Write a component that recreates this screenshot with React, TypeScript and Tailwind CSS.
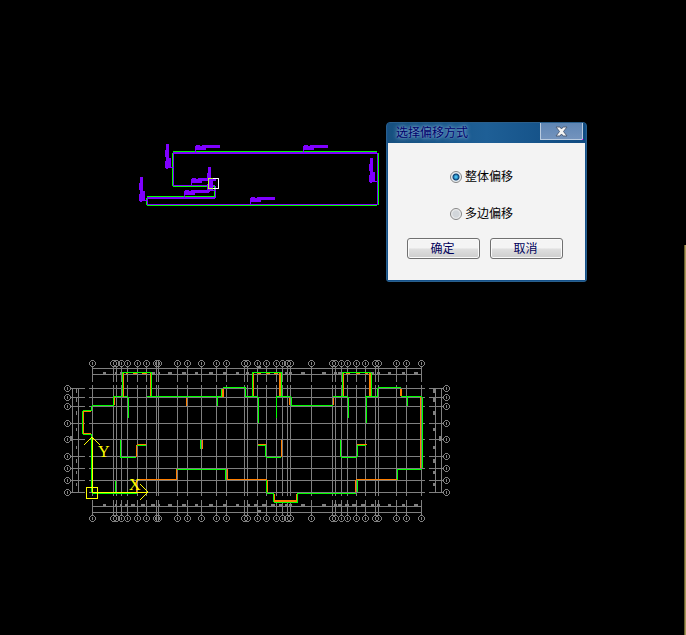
import { useState } from "react";

type Box = [number, number, number, number];

const GRAY = "#808080";
const GREEN = "#00ff00";
const ORANGE = "#ff7f00";
const PURPLE = "#7f00ff";
const YELLOW = "#ffff00";

// Axis positions of the floor plan
const axisX = [
  92, 113, 116, 121, 127, 137, 146, 156, 158, 177, 187, 201, 216, 226, 244, 247,
  257, 266, 276, 282, 287, 290, 311, 332, 335, 341, 347, 356, 365, 375, 378, 396,
  406, 421,
];
const axisY = [388, 397, 406, 423, 439, 456, 468, 480, 492];

// Dimension texts, too small to read at this zoom level: [x, width]
const dimsTop: [number, number][] = [
  [103, 3], [115, 2], [120, 3], [152, 3], [158, 2], [168, 4], [182, 4], [195, 3],
  [209, 4], [223, 3], [236, 3], [246, 3], [285, 3], [289, 3], [301, 4], [322, 4],
  [334, 3], [338, 4], [371, 3], [377, 3], [388, 3], [402, 3], [414, 4],
];
const dimsBottom: [number, number][] = [
  [103, 3], [115, 2], [120, 2], [125, 2], [131, 4], [141, 4], [151, 4], [158, 2],
  [168, 4], [182, 4], [195, 3], [209, 4], [223, 3], [236, 3], [247, 3], [254, 3],
  [262, 4], [271, 4], [279, 4], [285, 3], [289, 3], [301, 4], [322, 4], [334, 3],
  [338, 4], [345, 4], [352, 4], [361, 4], [371, 3], [377, 3], [388, 3], [402, 3],
  [414, 4],
];
const dimsSide: [number, number][] = [
  [389, 4], [398, 4], [411, 4], [428, 3], [446, 3], [459, 4], [471, 3], [483, 3],
];

const greenWalls: Box[] = [
  // stair tops
  [122, 372, 30, 1], [122, 373, 1, 24], [151, 373, 1, 24],
  [252, 372, 30, 1], [252, 373, 1, 24], [281, 373, 1, 24],
  [342, 372, 29, 1], [342, 373, 1, 24], [371, 373, 1, 24],
  // upper outline
  [92, 405, 22, 1], [113, 396, 1, 10], [113, 396, 15, 1], [128, 397, 1, 21],
  [147, 396, 76, 1], [217, 397, 1, 9], [221, 389, 1, 8], [223, 387, 23, 1],
  [245, 388, 1, 9], [245, 396, 13, 1], [258, 397, 1, 26], [276, 396, 15, 1],
  [276, 397, 1, 21], [291, 397, 1, 9], [291, 405, 42, 1], [333, 396, 15, 1],
  [348, 397, 1, 21], [365, 396, 13, 1], [366, 397, 1, 26], [377, 388, 1, 9],
  [378, 387, 23, 1], [401, 396, 21, 1], [407, 397, 1, 9], [422, 397, 1, 71],
  // balcony on the left
  [91, 406, 1, 5], [83, 410, 9, 1], [82, 411, 1, 23], [83, 434, 9, 1],
  [91, 434, 1, 58],
  // inner walls
  [120, 440, 1, 17], [120, 457, 16, 1], [137, 445, 9, 1], [200, 440, 1, 9],
  [258, 445, 8, 1], [265, 445, 1, 12], [266, 457, 15, 1], [340, 440, 1, 17],
  [341, 457, 16, 1], [357, 445, 1, 12], [357, 445, 9, 1],
  // lower outline
  [115, 481, 1, 11], [177, 469, 49, 1], [225, 469, 1, 11], [266, 480, 1, 13],
  [267, 493, 7, 1], [273, 493, 1, 9], [274, 502, 24, 1], [297, 493, 1, 9],
  [298, 493, 58, 1], [357, 480, 1, 12], [397, 469, 1, 11], [397, 469, 25, 1],
  [92, 493, 45, 1],
];

const orangeWalls: Box[] = [
  [123, 373, 1, 24], [150, 373, 1, 23], [253, 373, 1, 23], [279, 373, 2, 23],
  [343, 373, 1, 23], [369, 373, 2, 23], [114, 397, 1, 8], [186, 398, 1, 8],
  [222, 389, 2, 8], [289, 398, 1, 7], [333, 398, 1, 7], [400, 389, 2, 7],
  [420, 397, 1, 71], [83, 411, 8, 1], [83, 411, 1, 23], [83, 433, 8, 1],
  [136, 445, 1, 12], [137, 444, 9, 1], [202, 440, 1, 9], [258, 444, 8, 1],
  [281, 440, 1, 17], [357, 444, 10, 1], [136, 480, 1, 12], [137, 479, 39, 1],
  [176, 469, 1, 11], [227, 469, 1, 11], [227, 479, 40, 1], [267, 480, 1, 12],
  [274, 494, 1, 8], [296, 494, 1, 8], [275, 500, 21, 2], [355, 480, 1, 12],
  [356, 479, 41, 1],
  // stair treads
  [126, 373, 2, 1], [133, 373, 4, 1], [142, 373, 5, 1],
  [257, 373, 4, 1], [266, 373, 4, 1], [274, 373, 4, 1],
  [346, 373, 4, 1], [356, 373, 4, 1], [365, 373, 3, 1],
];

// Outline being offset, green original and purple copy
const outlineGreen: Box[] = [
  [173, 151, 204, 1], [172, 153, 1, 33], [173, 186, 42, 1], [214, 186, 1, 11],
  [147, 196, 68, 1], [146, 198, 1, 7], [147, 205, 230, 1], [378, 153, 1, 52],
];
const outlinePurple: Box[] = [
  [173, 152, 204, 2], [173, 153, 1, 33], [173, 185, 42, 1], [215, 186, 1, 12],
  [147, 197, 68, 2], [147, 198, 1, 7], [147, 204, 230, 1], [377, 153, 1, 52],
];

const horizontalTags: [number, number][] = [
  [195, 145], [303, 145], [191, 178], [184, 190], [250, 197],
];
const verticalTags: [number, number][] = [
  [166, 144], [140, 177], [208, 167], [370, 158],
];

function Boxes({ items, fill }: { items: Box[]; fill: string }) {
  return (
    <g fill={fill}>
      {items.map(([x, y, width, height], i) => (
        <rect key={i} x={x} y={y} width={width} height={height} />
      ))}
    </g>
  );
}

function Bubble({ x, y }: { x: number; y: number }) {
  return (
    <g>
      <path
        d={`M${x - 1} ${y - 3}h3v1h1v1h1v3h-1v1h-1v1h-3v-1h-1v-1h-1v-3h1v-1h1z M${x - 1} ${y - 2}v1h-1v3h1v1h3v-1h1v-3h-1v-1z`}
        fillRule="evenodd"
      />
      <rect x={x} y={y - 1} width={1} height={3} />
    </g>
  );
}

function FloorPlan() {
  return (
    <g>
      <g fill={GRAY}>
        {axisX.map((x) => (
          <g key={x}>
            <rect x={x} y={366} width={1} height={16} />
            <rect x={x} y={385} width={1} height={111} />
            <rect x={x} y={500} width={1} height={15} />
            <Bubble x={x} y={363} />
            <Bubble x={x} y={518} />
          </g>
        ))}
        {axisY.map((y) => (
          <g key={y}>
            <rect x={70} y={y} width={15} height={1} />
            <rect x={89} y={y} width={336} height={1} />
            <rect x={429} y={y} width={15} height={1} />
            <Bubble x={67} y={y} />
            <Bubble x={446} y={y} />
          </g>
        ))}
        {[368, 374, 506, 512].map((y) => (
          <rect key={y} x={92} y={y} width={330} height={1} />
        ))}
        {[72, 78, 435, 441].map((x) => (
          <rect key={x} x={x} y={388} width={1} height={105} />
        ))}
        {dimsTop.map(([x, w]) => (
          <rect key={x} x={x} y={372} width={w} height={2} />
        ))}
        {dimsBottom.map(([x, w]) => (
          <rect key={x} x={x} y={504} width={w} height={2} />
        ))}
        {dimsSide.map(([y, h]) => (
          <g key={y}>
            <rect x={76} y={y} width={1} height={h} />
            <rect x={433} y={y} width={2} height={h} />
          </g>
        ))}
        <rect x={257} y={366} width={4} height={2} />
        <rect x={257} y={510} width={4} height={2} />
        <rect x={70} y={436} width={3} height={5} />
        <rect x={439} y={436} width={2} height={5} />
      </g>
      <Boxes items={greenWalls} fill={GREEN} />
      <Boxes items={orangeWalls} fill={ORANGE} />
    </g>
  );
}

function AxisIcon() {
  return (
    <g stroke={YELLOW} fill="none">
      <rect x={86} y={487} width={11} height={11} />
      <path d="M92 492V437M84 445L92 437L100 445" />
      <path d="M92 492H148M140 484L148 492L140 500" />
      <g fill={YELLOW} stroke="none" className="font-['Liberation_Serif',serif] text-[16px]">
        <text x={98} y={457}>Y</text>
        <text x={129} y={490}>X</text>
      </g>
    </g>
  );
}

function Outline() {
  return (
    <g>
      <Boxes items={outlineGreen} fill={GREEN} />
      <Boxes items={outlinePurple} fill={PURPLE} />
      <g fill={PURPLE}>
        {horizontalTags.map(([x, y]) => (
          <path key={x} d={`M${x} ${y + 1}h1v-1h4v1h2v-1h18v3h-14v2h-10v3h-1z`} />
        ))}
        {verticalTags.map(([x, y]) => (
          <path key={x} d={`M${x} ${y}h3v14h2v9h3v1h-6v1h-2v-1h-1v-7h1v-4h-1z`} />
        ))}
      </g>
      <path d="M213 178H208V188H213" fill="none" stroke="#b9ff3c" />
      <path d="M213 178H218V188H213" fill="none" stroke="#ffffff" />
    </g>
  );
}

const options = [
  { id: "whole", label: "整体偏移" },
  { id: "multi", label: "多边偏移" },
];

function OffsetDialog() {
  const [mode, setMode] = useState("whole");

  return (
    <form
      role="dialog"
      aria-labelledby="dialog-title"
      onSubmit={(e) => e.preventDefault()}
      className="absolute left-[386px] top-[122px] w-[201px] rounded-t-[4px] rounded-b-[3px] border border-[#2a5f8c] bg-[#14518a] px-px pb-px"
    >
      <div className="flex h-5 items-start justify-between bg-linear-to-r from-[#17507f] via-[#1e5f96] to-[#0f4a80] pl-2 pr-0.5">
        <h1
          id="dialog-title"
          className="text-[12px] leading-5 text-[#00006a] [text-shadow:0_0_2px_#6f9cc6,0_0_4px_#6f9cc6,0_0_5px_#6f9cc6]"
        >
          选择偏移方式
        </h1>
        <button
          type="button"
          aria-label="Close"
          className="relative flex h-[17px] w-[43px] items-center justify-center border border-t-0 border-[#b9cbe0] bg-linear-to-b from-[#5f86b4] to-[#7393bd]"
        >
          <svg width="13" height="11" viewBox="0 0 13 11">
            <path
              d="M1 1H5L6.5 3L8 1H12L8.5 5.5L12 10H8L6.5 8L5 10H1L4.5 5.5Z"
              fill="#f4f4f4"
              stroke="#50607a"
            />
          </svg>
          <span className="absolute -bottom-px -right-px size-px bg-[#ff00ff]" />
        </button>
      </div>

      <div className="bg-[#f3f3f3] px-[19px] pb-[21px] pt-[25px]">
        <div className="flex flex-col items-center gap-[19px] pr-[10px]">
          {options.map((option) => (
            <label
              key={option.id}
              htmlFor={option.id}
              className="flex items-center gap-[3px] text-[12px] leading-[18px] text-black"
            >
              <input
                type="radio"
                id={option.id}
                name="mode"
                checked={mode === option.id}
                onChange={() => setMode(option.id)}
                className="size-3 appearance-none rounded-full border border-[#858585] bg-[radial-gradient(circle,#d2d6da_0_3px,#f4f4f4_5px)] checked:bg-[radial-gradient(circle_at_50%_50%,#45bdf0_0_1px,#0b3d70_3px,#e8eef2_4px)]"
              />
              {option.label}
            </label>
          ))}
        </div>

        <div className="mt-[15px] flex justify-between gap-[10px] pr-[3px]">
          <button
            type="submit"
            className="h-[21px] flex-1 rounded-[3px] border border-[#707070] bg-linear-to-b from-[#f4f4f4] from-45% via-[#dedede] via-55% to-[#cdcdcd] pr-0.5 text-[12px] leading-[20px] text-[#00005a] shadow-[inset_0_0_0_1px_#fafafa]"
          >
            确定
          </button>
          <button
            type="button"
            className="h-[21px] flex-1 rounded-[3px] border border-[#707070] bg-linear-to-b from-[#f4f4f4] from-45% via-[#dedede] via-55% to-[#cdcdcd] pr-0.5 text-[12px] leading-[20px] text-[#00005a] shadow-[inset_0_0_0_1px_#fafafa]"
          >
            取消
          </button>
        </div>
      </div>
    </form>
  );
}

export default function App() {
  return (
    <main className="relative min-h-screen overflow-hidden bg-black font-['Liberation_Sans','Noto_Sans_CJK_SC',sans-serif]">
      <svg width="480" height="540" className="block" shapeRendering="crispEdges">
        <Outline />
        <FloorPlan />
        <AxisIcon />
      </svg>
      <OffsetDialog />
      <div className="absolute bottom-0 right-0 top-[245px] w-0.5 border-l border-[#6b6130] bg-[#a8975a]" />
    </main>
  );
}
